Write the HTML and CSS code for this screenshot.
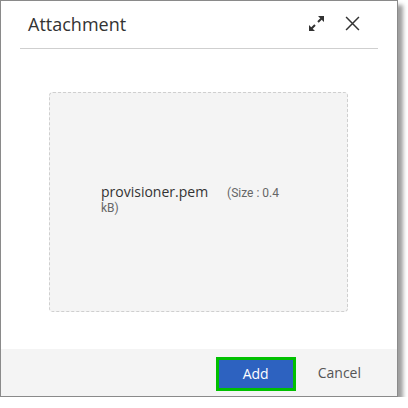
FILE: index.html
```html
<!DOCTYPE html>
<html lang="en">
<head>
  <meta charset="UTF-8">
  <title>Attachment</title>
  <link rel="stylesheet" href="styles.css">
</head>
<body>
  <div class="dialog">
    <div class="head">
      <div class="title">Attachment</div>
      <div class="tools">
        <!-- 全屏 -->
        <svg class="ico-expand" viewBox="0 0 17 17" width="17" height="17">
          <path d="M10 1h6v6z M1 10v6h6z" fill="#333"/>
          <path d="M14.5 2.5L10 7 M2.5 14.5L7 10" stroke="#333" stroke-width="2" fill="none"/>
        </svg>
        <!-- 关闭 -->
        <svg class="ico-close" viewBox="0 0 14 14" width="15" height="15"><path d="M1 1L13 13M13 1L1 13" stroke="#333" stroke-width="1.4" fill="none"/></svg>
      </div>
    </div>
    <div class="body">
      <div class="drop">
        <div class="file">
          <span class="name">provisioner.pem</span><span class="size">(Size : 0.4</span> <span class="size">kB)</span>
        </div>
      </div>
    </div>
    <div class="foot">
      <button class="btn-add">Add</button>
      <button class="btn-cancel">Cancel</button>
    </div>
  </div>
</body>
</html>
```
FILE: styles.css
```css
/* 样式重置 */
body{
  margin:0;
  background:#fff;
  font-family:"Open Sans","Noto Sans",sans-serif;
  color:#333;
}
button{
  font-family:inherit;
  border-radius:0;
  cursor:pointer;
}
.dialog{
  width:396px;
  height:395px;
  border:1px solid #8a8a8a;
  background:#fff;
  box-shadow:5px 5px 4px rgba(0,0,0,.38);
  display:flex;
  flex-direction:column;
}
.head{
  margin:0 19px;
  height:47px;
  border-bottom:1px solid #cfcfcf;
  display:flex;
  align-items:center;
  justify-content:space-between;
}
.title{
  padding-left:8px;
  font-size:18px;
  color:#333;
  padding-bottom:1px;
}
.tools{
  display:flex;
  align-items:center;
  gap:20px;
  padding:0 18px 2px 0;
}
.tools svg{
  display:block;
}
.body{
  flex:1;
  padding:43px 0 0 48px;
}
.drop{
  width:297px;
  height:218px;
  border:1px dashed #cfcfcf;
  border-radius:4px;
  background:#f4f4f4;
  display:flex;
  align-items:center;
  justify-content:center;
}
.file{
  width:195px;
  font-family:Roboto,"Noto Sans",sans-serif;
  font-size:12px;
  line-height:15px;
  color:#666;
  margin-top:-4px;
}
.file .name{
  font-family:"Open Sans","Noto Sans",sans-serif;
  font-size:14px;
  line-height:15px;
  color:#333;
  margin-right:19px;
}
.foot{
  height:47px;
  background:#f4f4f4;
  display:flex;
  align-items:center;
  justify-content:flex-end;
  padding-right:28px;
}
.btn-add{
  width:80px;
  height:34px;
  margin-top:2px;
  border:3px solid #00c000;
  background:#2d62c0;
  color:#fff;
  font-size:14px;
}
.btn-cancel{
  margin-left:14px;
  border:0;
  background:transparent;
  color:#555;
  font-size:14px;
  padding:0 8px;
}
```
